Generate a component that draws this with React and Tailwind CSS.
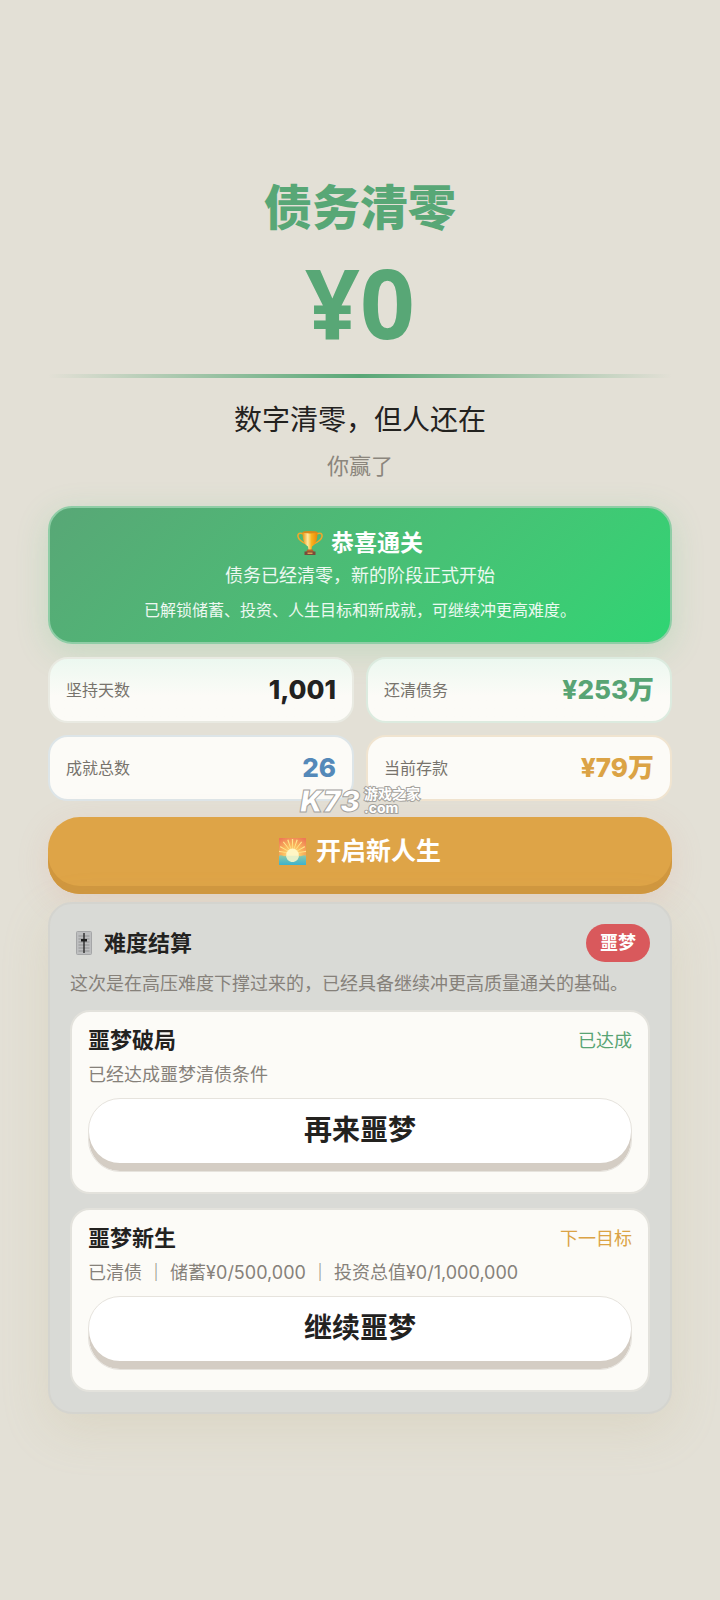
import React from 'react';

const stats = [
    { label: '坚持天数', value: '1,001', color: 'text-[#23221f]', card: 'border-[#e9eae2] bg-linear-to-b from-[#ecf8f0] to-[#fcfbf7] to-60%' },
    { label: '还清债务', value: '¥253万', color: 'text-[#58a474]', card: 'border-[#dcebdf] bg-linear-to-b from-[#ecf8f0] to-[#fcfbf7] to-60%' },
    { label: '成就总数', value: '26', color: 'text-[#5489b9]', card: 'border-[#dde5e8] bg-[#fcfbf7]' },
    { label: '当前存款', value: '¥79万', color: 'text-[#dba345]', card: 'border-[#f0e4d0] bg-[#fcfbf7]' },
];

const goals = [
    { title: '噩梦破局', status: '已达成', statusColor: 'text-[#58a474]', desc: '已经达成噩梦清债条件', action: '再来噩梦' },
    { title: '噩梦新生', status: '下一目标', statusColor: 'text-[#dba345]', desc: '已清债 ｜ 储蓄¥0/500,000 ｜ 投资总值¥0/1,000,000', action: '继续噩梦' },
];

const TrophyIcon = () => (
    <svg viewBox="0 0 26 26" className="w-[26px] h-[26px] shrink-0" aria-hidden="true">
        <defs>
            <linearGradient id="cup" x1="0" x2="1" y1="0" y2="0">
                <stop offset="0" stopColor="#e8920f" />
                <stop offset="0.35" stopColor="#ffe9a0" />
                <stop offset="0.6" stopColor="#fbb41d" />
                <stop offset="1" stopColor="#e8860c" />
            </linearGradient>
        </defs>
        <path d="M6.500 4C2.500 2.200.6 3.600 1 6.500 1.500 10 5 12 9.500 14M19.500 4c4-1.800 5.900-.4 5.500 2.500C24.500 10 21 12 16.500 14" fill="none" stroke="#f0a82b" strokeWidth="1.600" />
        <path d="M5.500 2h15c0 7.500-1.500 12-5.500 14.500l-.7 4.500h-2.600l-.7-4.500C7 14 5.500 9.500 5.500 2z" fill="url(#cup)" />
        <ellipse cx="13" cy="2.200" rx="7.500" ry="1.300" fill="#d98a1a" />
        <path d="M10.500 19.500h5l1.500 2.500h-8z" fill="#b9642a" />
        <path d="M7.500 21.500h11V25h-11z" fill="#7a4a3a" />
        <path d="M10.500 22.500h5v1.500h-5z" fill="#d9a050" />
    </svg>
);

const SunriseIcon = () => (
    <svg viewBox="0 0 28 28" className="w-[27px] h-[27px] shrink-0" aria-hidden="true">
        <defs>
            <radialGradient id="sky" cx="0.5" cy="0.65" r="0.75">
                <stop offset="0" stopColor="#ffec9a" />
                <stop offset="0.5" stopColor="#fbb85c" />
                <stop offset="1" stopColor="#ee7a55" />
            </radialGradient>
            <linearGradient id="sea" x1="0" x2="0" y1="0" y2="1">
                <stop offset="0" stopColor="#8ec9a8" />
                <stop offset="1" stopColor="#3bb3cf" />
            </linearGradient>
        </defs>
        <path d="M0 0h28v28H0z" fill="url(#sky)" />
        <path d="M14 16 13.300 1h1.400zM14 16 8.500 2l1.300-.5zM14 16l4.200-14.500 1.300.5zM14 16 4 4.500 5 3.500zM14 16 23 3.500l1 1zM14 16 1 9.500 1.500 8.300zM14 16 26.500 8.300 27 9.500zM14 16 0 14.500v-1.400zM14 16l14-2.900v1.400z" fill="#ffe58a" />
        <path d="M0 18.500q2-1 4 0t4 0 4 0 4 0 4 0 4 0 4 0V28H0z" fill="url(#sea)" />
        <circle cx="14" cy="17.500" r="6.500" fill="#fff6c4" />
        <path d="M7.500 18.500h13c0 4-3 6.500-6.500 6.500s-6.500-2.500-6.500-6.500z" fill="#e6f0c8" />
    </svg>
);

const SliderIcon = () => (
    <svg viewBox="0 0 16 24" className="w-[16px] h-[24px] shrink-0" aria-hidden="true">
        <rect x="0.500" y="0.500" width="15" height="23" rx="1" fill="#bdbebf" stroke="#a5a6a7" />
        <path d="M2.500 5h11M2.500 8h11M2.500 11h11M2.500 14h11M2.500 17h11M2.500 20h11" stroke="#929394" strokeWidth="1" />
        <path d="M8 2v20" stroke="#2b2b2b" strokeWidth="1.400" />
        <path d="M5 8h6v2.500H5z" fill="#1f1f1f" />
    </svg>
);

const StatCard = ({ label, value, color, card }) => (
    <div className={`flex items-center justify-between h-[66px] px-4 rounded-[20px] border-2 ${card}`}>
        <dt className="text-[16px] text-[#77736c]">{label}</dt>
        <dd className={`text-[26px] leading-8 font-extrabold ${color}`}>{value}</dd>
    </div>
);

const GoalCard = ({ title, status, statusColor, desc, action }) => (
    <article className="px-4 pt-3 pb-5 rounded-[20px] border-2 border-[#e3e2dc] bg-[#fcfbf7]">
        <div className="flex items-center justify-between h-8">
            <h3 className="text-[22px] font-bold">{title}</h3>
            <span className={`text-[18px] ${statusColor}`}>{status}</span>
        </div>
        <p className="mt-1 text-[18px] leading-[30px] text-[#86817a]">{desc}</p>
        <button type="button" className="mt-2 w-full h-[74px] pb-[10px] rounded-[32px] border border-[#e6e3dd] bg-white text-[28px] font-bold shadow-[inset_0_-8px_0_#d4cdc4]">
            {action}
        </button>
    </article>
);

const Watermark = () => (
    <div className="absolute left-1/2 -top-[30px] -translate-x-1/2 flex items-center gap-1 whitespace-nowrap text-white pointer-events-none" aria-hidden="true">
        <span className="text-[30px] leading-[28px] font-black italic [-webkit-text-stroke:1px_#a5a39e]">K73</span>
        <span className="flex flex-col text-[14px] leading-[14px] font-bold [-webkit-text-stroke:2px_#a5a39e] [paint-order:stroke_fill]">
            <span>游戏之家</span>
            <span>.com</span>
        </span>
    </div>
);

const App = () => {
    return (
        <main className="min-h-screen px-12 pt-[178px] pb-44 bg-[#e3e0d6] text-[#23221f] font-['Inter','Noto_Sans_CJK_SC',sans-serif]">
            <header className="text-center">
                <h1 className="text-[48px] leading-[60px] font-black text-[#58a776]">债务清零</h1>
                <p className="mt-4 text-[96px] leading-[96px] font-bold text-[#58a776] font-['Noto_Sans',sans-serif]">¥0</p>
                <div className="mt-6 h-1 bg-linear-to-r from-transparent via-[#58a776] to-transparent" />
                <p className="mt-6 text-[28px] leading-[36px]">数字清零，但人还在</p>
                <p className="mt-[14px] text-[22px] leading-[28px] text-[#8b867d]">你赢了</p>
            </header>

            <section className="mt-[26px] h-[138px] pt-1 flex flex-col items-center justify-center rounded-[24px] border-2 border-[#8fcda6] bg-linear-135 from-[#58a776] to-[#2ed573] bg-origin-border text-white text-center shadow-[0_8px_32px_rgba(88,190,120,0.22)]">
                <h2 className="flex items-center gap-2 text-[23px] leading-[32px] font-bold"><TrophyIcon />恭喜通关</h2>
                <p className="text-[18px] leading-[34px] text-white/90">债务已经清零，新的阶段正式开始</p>
                <p className="text-[16px] leading-[34px] text-white/90">已解锁储蓄、投资、人生目标和新成就，可继续冲更高难度。</p>
            </section>

            <dl className="mt-[13px] grid grid-cols-2 gap-3">
                {stats.map(stat => <StatCard key={stat.label} {...stat} />)}
            </dl>

            <div className="relative mt-4">
                <button type="button" className="flex items-center justify-center gap-[10px] w-full h-[77px] pb-2 rounded-[32px] bg-[#dea447] text-white text-[25px] font-bold shadow-[inset_0_-8px_0_#d0973f,0_8px_32px_rgba(222,140,120,0.18)]">
                    <SunriseIcon />开启新人生
                </button>
                <Watermark />
            </div>

            <section className="relative mt-2 p-5 rounded-[24px] border-2 border-[#d4d4cf] bg-[#d9dad6] shadow-[0_16px_48px_rgba(190,175,130,0.2)]">
                <div className="flex items-center justify-between">
                    <h2 className="flex items-center gap-3 pl-[6px] text-[22px] font-bold"><SliderIcon />难度结算</h2>
                    <span className="px-[14px] rounded-[19px] bg-[#d9595c] text-white text-[18px] leading-[38px] font-bold">噩梦</span>
                </div>
                <p className="mt-2 text-[18px] leading-[28px] text-[#86817a]">这次是在高压难度下撑过来的，已经具备继续冲更高质量通关的基础。</p>
                <div className="mt-3 flex flex-col gap-[14px]">
                    {goals.map(goal => <GoalCard key={goal.title} {...goal} />)}
                </div>
            </section>
        </main>
    );
};

export default App;
